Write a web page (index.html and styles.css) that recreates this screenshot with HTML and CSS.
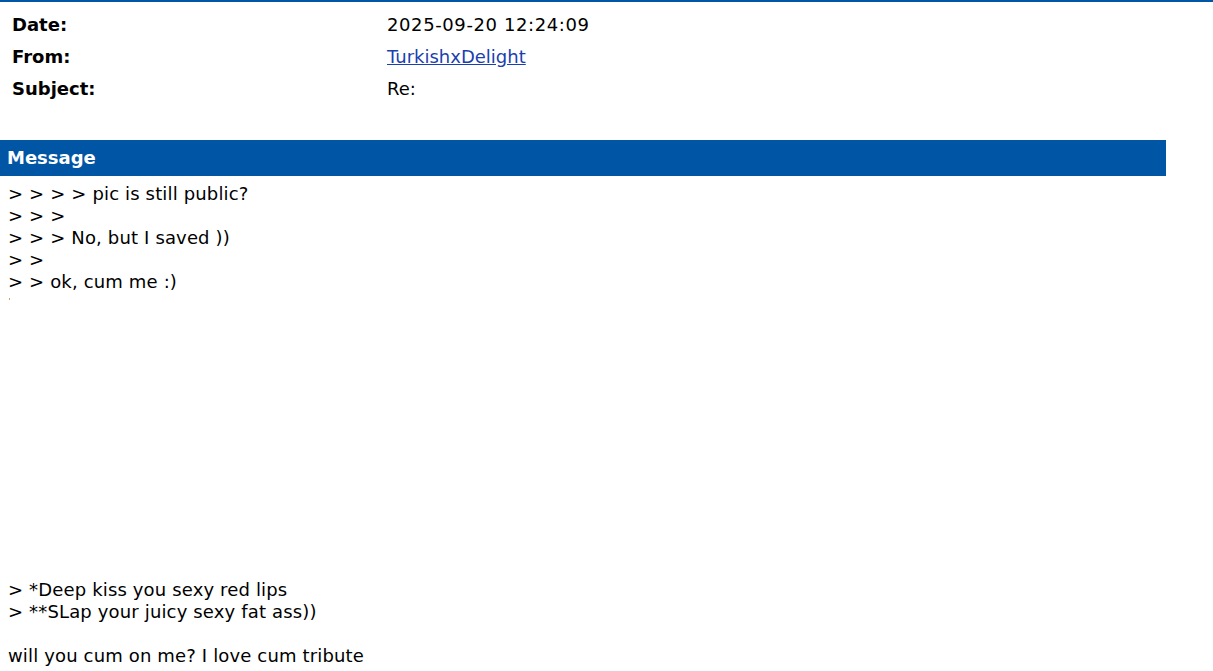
FILE: index.html
```html
<!DOCTYPE html>
<html>
<head>
<meta charset="utf-8">
<link rel="stylesheet" href="styles.css">
</head>
<body>
<div class="topline"></div>
<table class="headers">
<tr><th>Date:</th><td class="date">2025-09-20 12:24:09</td></tr>
<tr><th>From:</th><td><a href="#">TurkishxDelight</a></td></tr>
<tr><th>Subject:</th><td>Re:</td></tr>
</table>
<div class="msgbar">Message</div>
<div class="body">
<div class="line">&gt; &gt; &gt; &gt; pic is still public?</div>
<div class="line">&gt; &gt; &gt;</div>
<div class="line">&gt; &gt; &gt; No, but I saved ))</div>
<div class="line">&gt; &gt;</div>
<div class="line">&gt; &gt; ok, cum me :)</div>
<div class="dotline"><span class="dot"></span></div>
<div class="gap"></div>
<div class="line">&gt; *Deep kiss you sexy red lips</div>
<div class="line">&gt; **SLap your juicy sexy fat ass))</div>
<div class="line">&nbsp;</div>
<div class="line">will you cum on me? I love cum tribute</div>
</div>
</body>
</html>
```
FILE: styles.css
```css
html, body {
  margin: 0;
  padding: 0;
  background: #fff;
  font-family: "DejaVu Sans", Verdana, sans-serif;
  color: #000;
}
.topline {
  height: 2px;
  background: #0055a4;
}
.headers {
  border-collapse: collapse;
  margin: 7px 0 0 4px;
  font-size: 18px;
}
.headers th {
  text-align: left;
  font-weight: bold;
  width: 367px;
  padding: 4px 8px 6px 8px;
  height: 22px;
}
.headers td {
  padding: 4px 0 6px 0;
  height: 22px;
}
.headers td.date {
  letter-spacing: 0.6px;
}
.headers a {
  color: #1a3fb0;
}
.msgbar {
  margin-top: 35px;
  width: 1166px;
  height: 36px;
  box-sizing: border-box;
  background: #0055a4;
  color: #fff;
  font-weight: bold;
  font-size: 18px;
  line-height: 36px;
  padding-left: 7px;
}
.body {
  padding: 7px 8px 0 8px;
  font-size: 18px;
  line-height: 22px;
}
.line {
  white-space: pre;
  letter-spacing: 0.15px;
}
.dotline {
  height: 22px;
}
.dot {
  display: block;
  width: 1px;
  height: 2px;
  margin-left: 1px;
  margin-top: 5px;
  background: #d9a060;
}
.gap {
  height: 259px;
}
```
